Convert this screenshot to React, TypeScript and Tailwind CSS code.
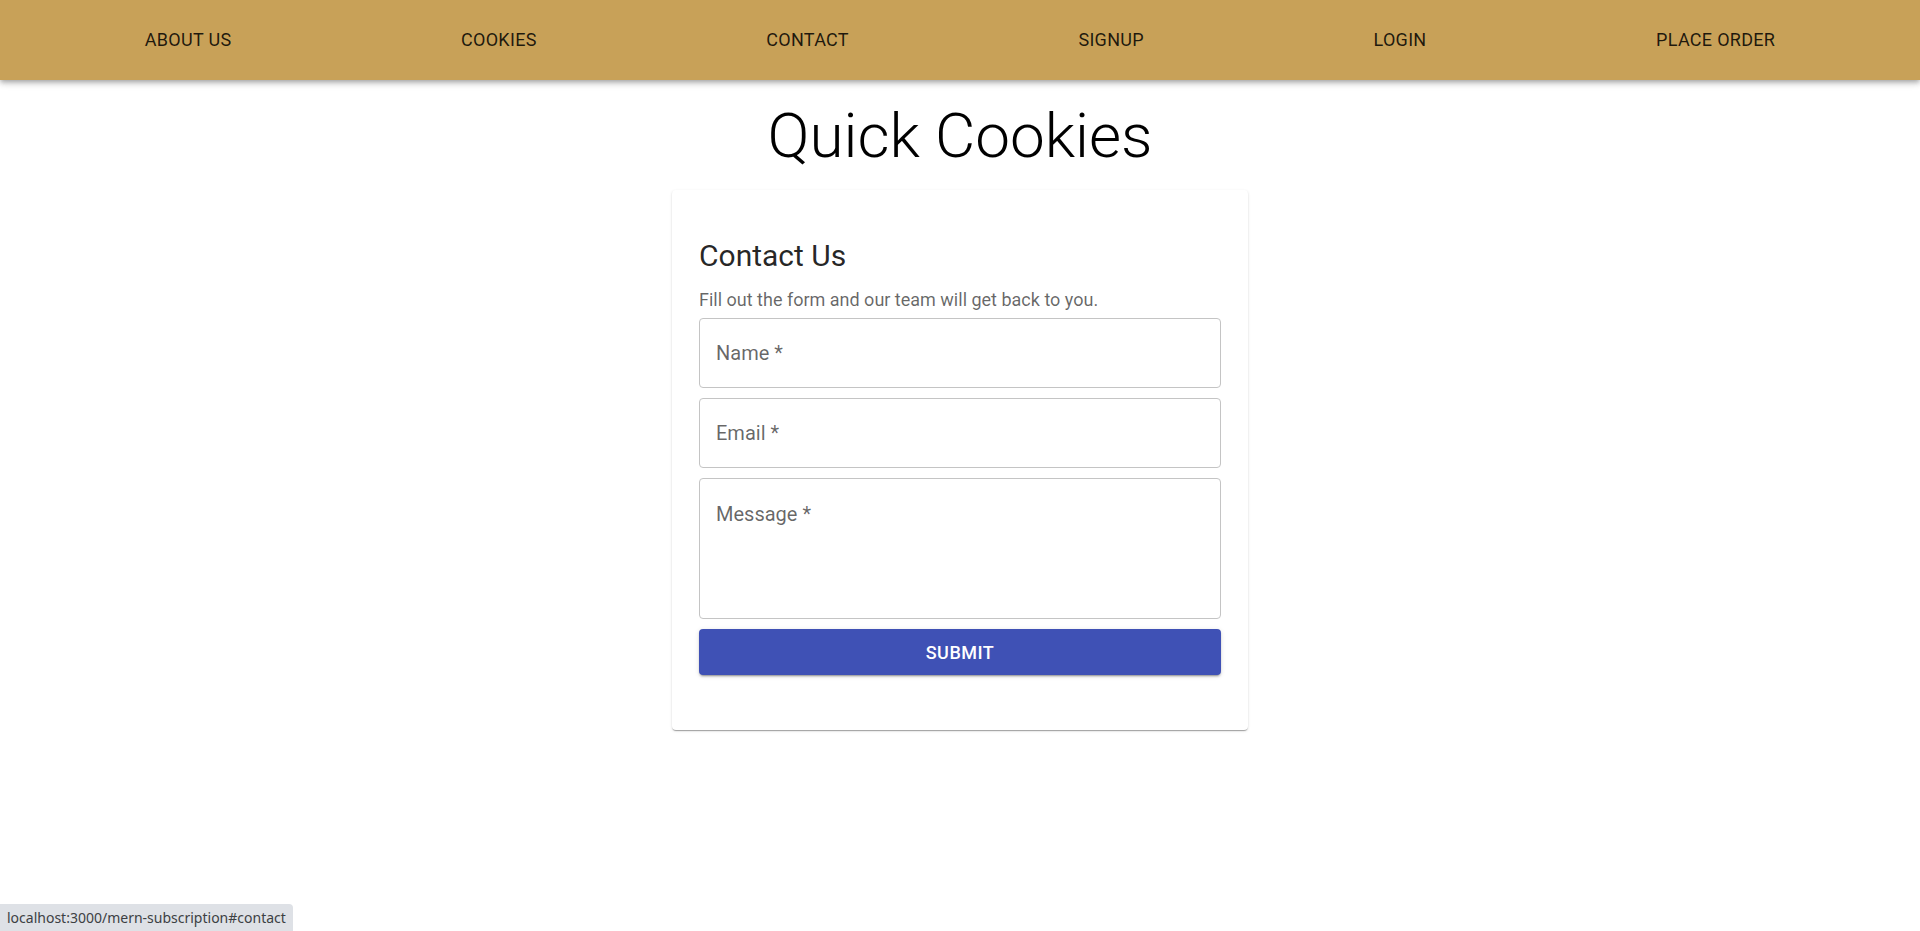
import React from 'react';

const navItems = ['About Us', 'Cookies', 'Contact', 'Signup', 'Login', 'Place Order'];

function NavBar() {
  return (
    <header className="relative z-10 h-20 bg-[#c8a158] shadow-[0px_2px_4px_-1px_rgba(0,0,0,0.2),0px_4px_5px_0px_rgba(0,0,0,0.14),0px_1px_10px_0px_rgba(0,0,0,0.12)]">
      <nav className="flex h-full items-center px-[30px]">
        {navItems.map((item) => (
          <a
            key={item}
            href="#"
            className="flex-auto text-center text-[18px] uppercase leading-none tracking-[0.3px] text-black/85"
          >
            {item}
          </a>
        ))}
      </nav>
    </header>
  );
}

function ContactCard() {
  const fieldClass =
    'w-full rounded-[4px] border border-[#c4c4c4] bg-white px-[16px] text-[20px] text-black/85 outline-none placeholder:text-black/60';

  return (
    <div className="mx-auto mt-[18px] w-[576px] rounded-[4px] bg-white px-[27px] pt-[47px] pb-[55px] shadow-[0px_2px_1px_-1px_rgba(0,0,0,0.2),0px_1px_1px_0px_rgba(0,0,0,0.14),0px_1px_3px_0px_rgba(0,0,0,0.12)]">
      <h2 className="text-[30px] font-normal leading-[37px] text-black/85">Contact Us</h2>
      <p className="mt-3 text-[18px] leading-[27px] text-black/60">
        Fill out the form and our team will get back to you.
      </p>
      <form className="mt-[5px] flex flex-col gap-[10px]" onSubmit={(e) => e.preventDefault()}>
        <input type="text" placeholder="Name *" className={`${fieldClass} h-[70px]`} />
        <input type="email" placeholder="Email *" className={`${fieldClass} h-[70px]`} />
        <textarea
          placeholder="Message *"
          className={`${fieldClass} h-[141px] resize-none pt-[24px] leading-[23px]`}
        />
        <button
          type="submit"
          className="h-[46px] w-full rounded-[4px] bg-[#3f51b5] text-[18px] font-medium uppercase tracking-[0.5px] text-white shadow-[0px_3px_1px_-2px_rgba(0,0,0,0.2),0px_2px_2px_0px_rgba(0,0,0,0.14),0px_1px_5px_0px_rgba(0,0,0,0.12)]"
        >
          Submit
        </button>
      </form>
    </div>
  );
}

export default function App() {
  return (
    <div className="min-h-screen bg-white font-[Roboto,'Liberation_Sans',sans-serif]">
      <NavBar />
      <h1 className="mt-5 text-center text-[62px] font-light leading-[72px] text-black">
        Quick Cookies
      </h1>
      <ContactCard />

      {/* browser status bubble */}
      <div className="fixed bottom-0 left-0 h-[27px] rounded-tr-[4px] bg-[#dee1e6] px-[7px] font-['Noto_Sans','Open_Sans',sans-serif] text-[14px] leading-[27px] text-[#3c4043]">
        localhost:3000/mern-subscription#contact
      </div>
    </div>
  );
}
